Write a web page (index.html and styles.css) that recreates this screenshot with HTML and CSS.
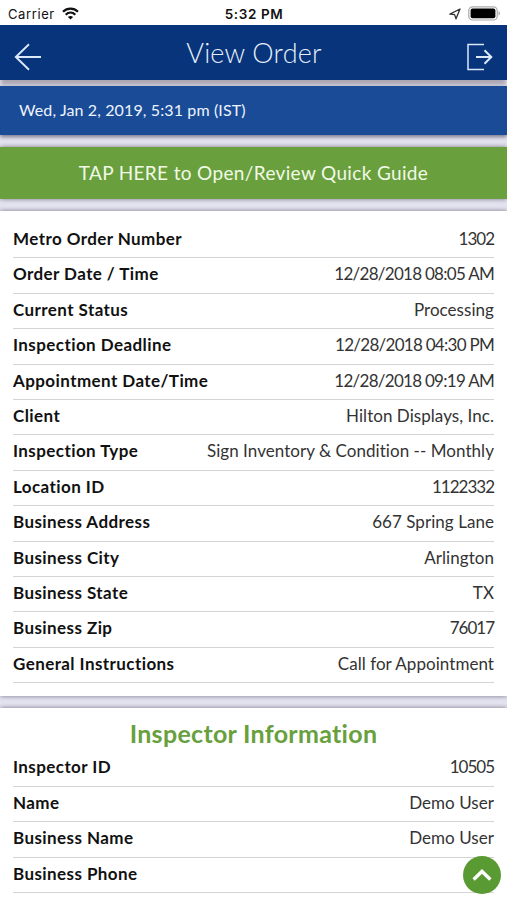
FILE: index.html
```html
<!DOCTYPE html>
<html lang="en">
<head>
    <meta charset="UTF-8">
    <title>View Order</title>
    <link rel="stylesheet" href="styles.css">
</head>
<body>
    <!-- Status bar -->
    <div class="status-bar">
        <div class="status-left">
            <span class="carrier">Carrier</span>
            <svg width="17" height="13" viewBox="0 0 17 13" fill="none" stroke="#111" stroke-width="2.2">
                <path d="M1 4.8C5.2 .6 11.8 .6 16 4.8"/>
                <path d="M3.7 7.7c2.8-2.7 6.8-2.7 9.6 0"/>
                <path d="M8.5 12.6 5.9 10c1.5-1.4 3.7-1.4 5.2 0z" fill="#111" stroke="none"/>
            </svg>
        </div>
        <div class="clock">5:32 PM</div>
        <div class="status-right">
            <svg width="12" height="12" viewBox="0 0 12 12" fill="none" stroke="#333" stroke-width="1.3" stroke-linejoin="round">
                <path d="M11 1 .9 6.2l4.7.4 1.4 4.2z"/>
            </svg>
            <svg width="32" height="15" viewBox="0 0 32 15">
                <rect x=".8" y=".8" width="28.4" height="13.2" rx="3.8" fill="#fff" stroke="#aaa" stroke-width="1.2"/>
                <rect x="2.6" y="2.6" width="24.8" height="9.6" rx="2" fill="#000"/>
                <path d="M30.6 5.2c1.6.6 1.6 3.8 0 4.4z" fill="#999"/>
            </svg>
        </div>
    </div>

    <!-- Header -->
    <div class="header">
        <svg class="back" width="28" height="28" viewBox="0 0 28 28" fill="none" stroke="#dbe8fa" stroke-width="1.9">
            <path d="M27 14H1.5M15 1.2 1.8 14 15 26.8"/>
        </svg>
        <h1>View Order</h1>
        <svg class="logout" width="28" height="28" viewBox="0 0 28 28" fill="none" stroke="#dbe8fa">
            <path d="M18 1.4H2v25.2h16" stroke-width="1.5"/>
            <path d="M10 14h16M18.5 7.2l6.8 6.8-6.8 6.8" stroke-width="2"/>
        </svg>
    </div>

    <div class="date-bar">Wed, Jan 2, 2019, 5:31 pm (IST)</div>
    <div class="guide">TAP HERE to Open/Review Quick Guide</div>

    <!-- Order details -->
    <div class="card">
        <div class="row"><b>Metro Order Number</b><span class="num">1302</span></div>
        <div class="row"><b>Order Date / Time</b><span class="date">12/28/2018 08:05 AM</span></div>
        <div class="row"><b>Current Status</b><span>Processing</span></div>
        <div class="row"><b>Inspection Deadline</b><span class="date">12/28/2018 04:30 PM</span></div>
        <div class="row"><b>Appointment Date/Time</b><span class="date">12/28/2018 09:19 AM</span></div>
        <div class="row"><b>Client</b><span>Hilton Displays, Inc.</span></div>
        <div class="row"><b>Inspection Type</b><span>Sign Inventory &amp; Condition -- Monthly</span></div>
        <div class="row"><b>Location ID</b><span class="num">1122332</span></div>
        <div class="row"><b>Business Address</b><span>667 Spring Lane</span></div>
        <div class="row"><b>Business City</b><span>Arlington</span></div>
        <div class="row"><b>Business State</b><span>TX</span></div>
        <div class="row"><b>Business Zip</b><span class="num">76017</span></div>
        <div class="row"><b>General Instructions</b><span>Call for Appointment</span></div>
    </div>

    <!-- Inspector details -->
    <div class="card inspector">
        <h2>Inspector Information</h2>
        <div class="row"><b>Inspector ID</b><span class="num">10505</span></div>
        <div class="row"><b>Name</b><span>Demo User</span></div>
        <div class="row"><b>Business Name</b><span>Demo User</span></div>
        <div class="row"><b>Business Phone</b><span></span></div>
    </div>

    <!-- Back to top -->
    <div class="to-top">
        <svg width="20" height="12" viewBox="0 0 20 12" fill="none" stroke="#fff" stroke-width="3.4">
            <path d="M1.6 10.4 10 2.4l8.4 8"/>
        </svg>
    </div>
</body>
</html>
```
FILE: styles.css
```css
* {
    box-sizing: border-box;
}
body {
    margin: 0;
    height: 900px;
    overflow: hidden;
    background: #e5e4f0;
    font-family: Lato, 'Liberation Sans', sans-serif;
    font-variant-ligatures: none;
    color: #111;
}
.status-bar {
    height: 25px;
    padding: 2px 7px 0 8px;
    background: #fff;
    display: grid;
    grid-template-columns: 1fr auto 1fr;
    align-items: center;
    font-family: Inter, 'Liberation Sans', sans-serif;
    font-size: 13px;
}
.status-left, .status-right {
    display: flex;
    align-items: center;
    gap: 7px;
}
.status-right {
    justify-content: flex-end;
}
.carrier {
    letter-spacing: 0.6px;
}
.clock {
    font-weight: 600;
    font-size: 13.5px;
    letter-spacing: 0.6px;
}
.header {
    height: 55px;
    padding: 0 13px 0 14px;
    background: #07347a;
    box-shadow: 0 6px 4px -1px #aca6b3;
    display: flex;
    justify-content: space-between;
    color: #e6effc;
}
.header svg {
    margin-top: 18px;
}
h1 {
    margin: 0;
    font-size: 27px;
    font-weight: 300;
    line-height: 56px;
    letter-spacing: 0.2px;
}
.date-bar {
    height: 49px;
    margin-top: 6px;
    padding-left: 19px;
    background: #194b97;
    box-shadow: 0 2px 4px #77758a;
    color: #eef4ff;
    font-size: 16px;
    line-height: 48px;
    letter-spacing: 0.12px;
}
.guide {
    height: 52px;
    margin: 12px 0;
    background: #6a9f3e;
    box-shadow: 0 0 5px #77758a;
    color: #f0fae6;
    font-size: 19px;
    line-height: 51px;
    letter-spacing: 0.35px;
    text-align: center;
}
.card {
    height: 485px;
    padding: 12px 13px 0 13px;
    background: #fff;
    box-shadow: 0 0 5px #77758a;
}
.row {
    height: 35.4px;
    border-bottom: 1.4px solid #d4d4d4;
    display: flex;
    justify-content: space-between;
    font-size: 17px;
    line-height: 31px;
}
.row b {
    font-weight: 700;
    letter-spacing: 0.42px;
}
.row span {
    color: #333;
    letter-spacing: 0.05px;
}
.row .date {
    letter-spacing: -0.72px;
}
.row .num {
    letter-spacing: -1px;
}
.inspector {
    height: 200px;
    margin-top: 12px;
    padding-top: 8px;
}
h2 {
    margin: 0;
    height: 35.4px;
    color: #67a03c;
    font-size: 25px;
    font-weight: 700;
    line-height: 35px;
    letter-spacing: 0.3px;
    text-align: center;
}
.to-top {
    position: fixed;
    right: 6px;
    bottom: 6px;
    width: 38px;
    height: 38px;
    border-radius: 50%;
    background: #5a9a32;
    display: flex;
    align-items: center;
    justify-content: center;
}
```
